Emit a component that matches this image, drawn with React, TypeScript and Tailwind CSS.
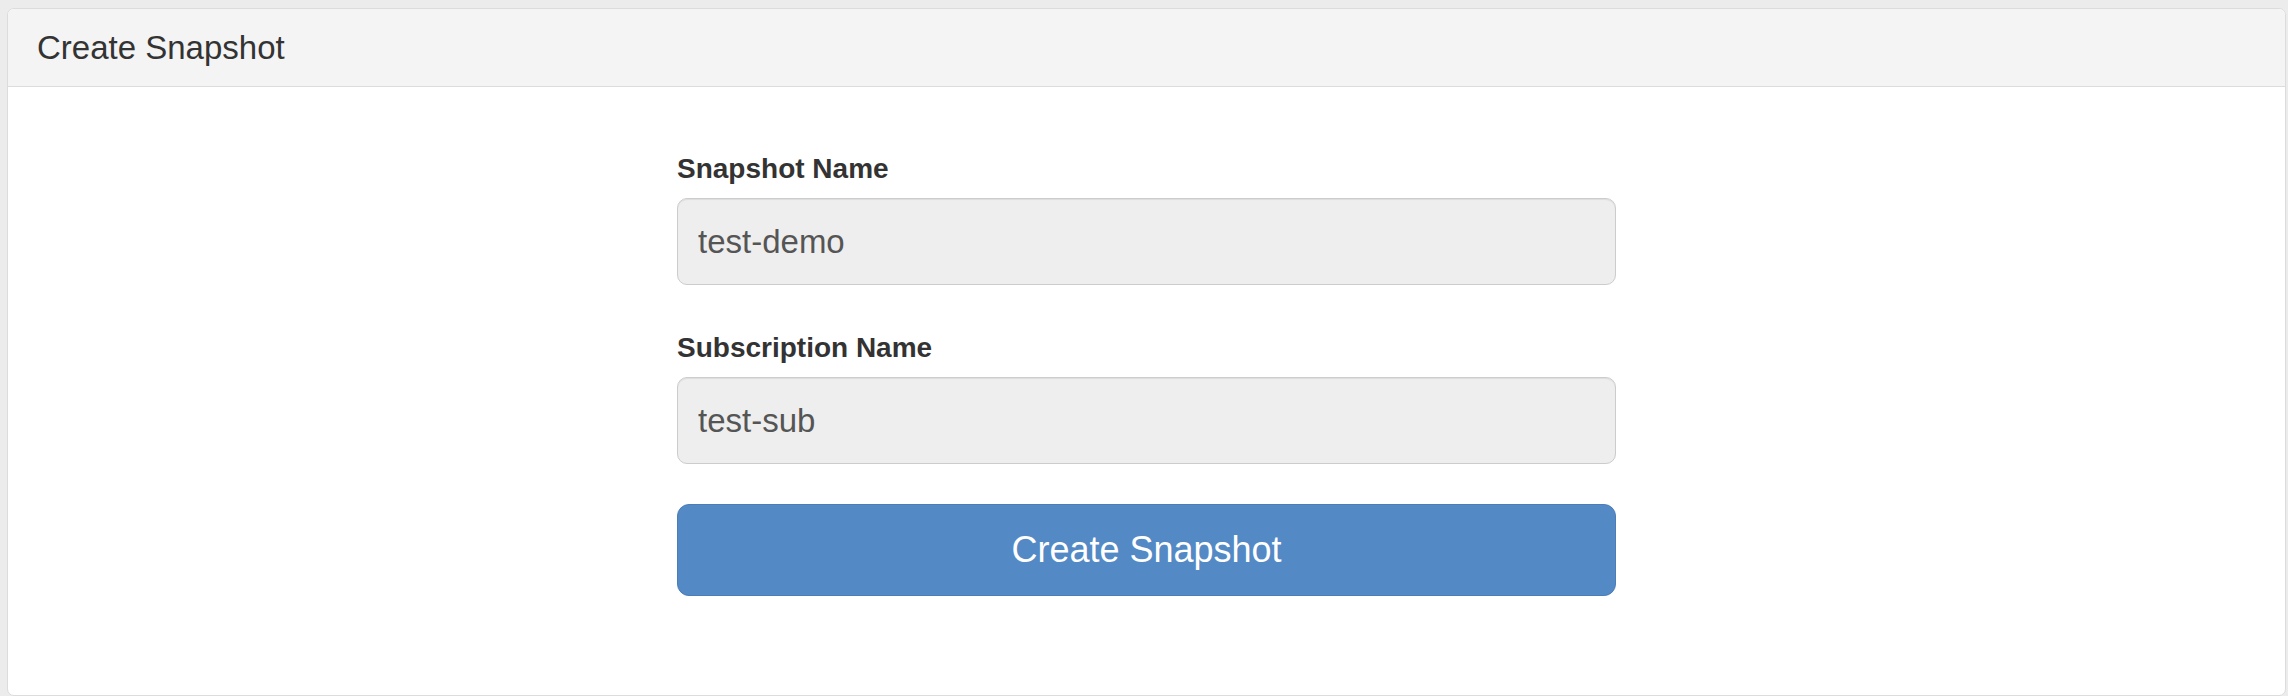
export default function App() {
  return (
    <div className="h-[696px] bg-[#ececec] pt-[8px] pl-[7px] pr-[2px] font-['Liberation_Sans',Arial,sans-serif]">
      <div className="h-[688px] bg-white border border-[#dcdcdc] rounded-[7px] overflow-hidden flex flex-col">
        {/* Header */}
        <div className="h-[78px] shrink-0 bg-[#f4f4f4] border-b border-[#dcdcdc] flex items-center pl-[29px]">
          <h3 className="text-[33px] text-[#333]">Create Snapshot</h3>
        </div>
        {/* Form */}
        <div className="pt-[62px]">
          <form className="w-[939px] mx-auto" onSubmit={(e) => e.preventDefault()}>
            <div>
              <label className="block text-[28px] leading-[40px] font-bold text-[#333] mb-[9px]">Snapshot Name</label>
              <input
                readOnly
                defaultValue="test-demo"
                className="block h-[87px] w-full rounded-[10px] border border-[#cccccc] bg-[#eeeeee] pl-[20px] text-[33px] text-[#555] shadow-[inset_0_1px_1px_rgba(0,0,0,0.075)] outline-none"
              />
            </div>
            <div className="mt-[43px]">
              <label className="block text-[28px] leading-[40px] font-bold text-[#333] mb-[9px]">Subscription Name</label>
              <input
                readOnly
                defaultValue="test-sub"
                className="block h-[87px] w-full rounded-[10px] border border-[#cccccc] bg-[#eeeeee] pl-[20px] text-[33px] text-[#555] shadow-[inset_0_1px_1px_rgba(0,0,0,0.075)] outline-none"
              />
            </div>
            <button
              type="submit"
              className="mt-[40px] h-[92px] w-full rounded-[12px] bg-[#5389c5] border border-[#4a7db9] text-white text-[36px]"
            >
              Create Snapshot
            </button>
          </form>
        </div>
      </div>
    </div>
  );
}
